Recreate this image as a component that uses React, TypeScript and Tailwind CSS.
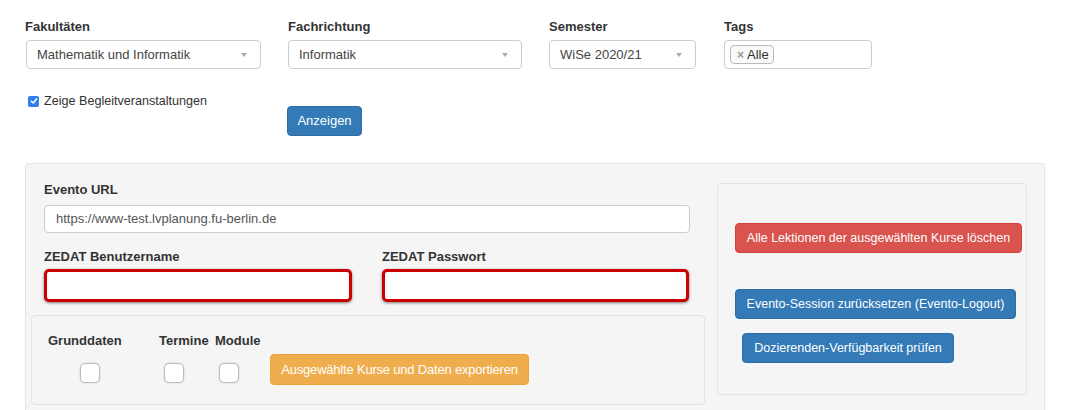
import React from 'react';

const Select = ({ value, width }: { value: string; width: string }) => (
  <div className={`${width} h-[29px] bg-white border border-[#ccc] rounded-[4px] flex items-center justify-between pl-[10px] pr-[13px] text-[#444]`}>
    <span>{value}</span>
    <span className="w-0 h-0 border-t-[4px] border-t-[#aaa] border-x-[3px] border-x-transparent" />
  </div>
);

const BigCheckbox = ({ className }: { className: string }) => (
  <div className={`w-[20px] h-[20px] bg-white border border-[#bdbdbd] rounded-[5px] shadow-[0_0_2px_rgba(0,0,0,0.2)] ${className}`} />
);

const App = () => {
  return (
    <div className="w-[1065px] h-[410px] overflow-hidden bg-white font-['Liberation_Sans',Arial,sans-serif] text-[13px] text-[#333]">
      <div className="pl-[25px] pt-[19px]">
        {/* Filter row */}
        <div className="flex">
          <div className="w-[235px] mr-[28px]">
            <label className="block font-bold leading-[16px] mb-[5px]">Fakultäten</label>
            <Select value="Mathematik und Informatik" width="w-[235px] ml-[1px]" />
          </div>
          <div className="w-[234px] mr-[27px]">
            <label className="block font-bold leading-[16px] mb-[5px]">Fachrichtung</label>
            <Select value="Informatik" width="w-[234px]" />
          </div>
          <div className="w-[147px] mr-[28px]">
            <label className="block font-bold leading-[16px] mb-[5px]">Semester</label>
            <Select value="WiSe 2020/21" width="w-[147px]" />
          </div>
          <div className="w-[148px]">
            <label className="block font-bold leading-[16px] mb-[5px]">Tags</label>
            <div className="w-[148px] h-[29px] bg-white border border-[#ccc] rounded-[4px] flex items-center pl-[5px]">
              <span className="h-[19px] flex items-center gap-[3px] pl-[6px] pr-[4px] border border-[#bbb] rounded-[4px] bg-[#fafafa] text-[#333]">
                <span className="text-[#999] font-bold text-[12px]">×</span>
                <span>Alle</span>
              </span>
            </div>
          </div>
        </div>

        {/* Options row */}
        <div className="flex items-start mt-[24px]">
          <div className="w-[262px] flex items-center h-[16px] pl-[3px] text-[12.6px]">
            <span className="w-[11px] h-[11px] rounded-[2px] bg-[#2f80ed] flex items-center justify-center mr-[5px]">
              <svg width="8" height="8" viewBox="0 0 8 8" fill="none">
                <path d="M1.3 4.2 L3.2 6 L6.7 1.8" stroke="white" strokeWidth="1.5" strokeLinecap="round" strokeLinejoin="round" />
              </svg>
            </span>
            <span className="text-[#333]">Zeige Begleitveranstaltungen</span>
          </div>
          <button className="mt-[13px] w-[75px] h-[30px] bg-[#337ab7] border border-[#2e6da4] rounded-[4px] text-white">
            Anzeigen
          </button>
        </div>

        {/* Export panel */}
        <div className="mt-[27px] w-[1020px] h-[270px] bg-[#f5f5f5] border border-[#e3e3e3] rounded-[4px] flex items-start pl-[5px]">
          <div className="w-[674px]">
            <div className="pt-[18px] pl-[13px] pr-[15px]">
              <label className="block font-bold leading-[16px] mb-[7px]">Evento URL</label>
              <div className="h-[28px] bg-white border border-[#ccc] rounded-[4px] flex items-center pl-[11px] text-[#555]">
                https://www-test.lvplanung.fu-berlin.de
              </div>
              <div className="flex gap-[30px] mt-[16px]">
                <div className="w-[308px]">
                  <label className="block font-bold leading-[16px] mb-[4px]">ZEDAT Benutzername</label>
                  <div className="h-[33px] bg-white border-[3px] border-[#cc0000] rounded-[5px] shadow-[0_1px_3px_rgba(0,0,0,0.5)]" />
                </div>
                <div className="w-[307px]">
                  <label className="block font-bold leading-[16px] mb-[4px]">ZEDAT Passwort</label>
                  <div className="h-[33px] bg-white border-[3px] border-[#cc0000] rounded-[5px] shadow-[0_1px_3px_rgba(0,0,0,0.5)]" />
                </div>
              </div>
            </div>
            <div className="mt-[13px] h-[90px] bg-[#f5f5f5] border border-[#e3e3e3] rounded-[4px] flex items-start pl-[16px] pt-[17px]">
              <div className="w-[111px]">
                <div className="font-bold leading-[16px]">Grunddaten</div>
                <BigCheckbox className="mt-[14px] ml-[32px]" />
              </div>
              <div className="w-[56px]">
                <div className="font-bold leading-[16px]">Termine</div>
                <BigCheckbox className="mt-[14px] ml-[5px]" />
              </div>
              <div className="w-[55px]">
                <div className="font-bold leading-[16px]">Module</div>
                <BigCheckbox className="mt-[14px] ml-[4px]" />
              </div>
              <button className="mt-[21px] w-[259px] h-[31px] bg-[#f0ad4e] border border-[#eea236] rounded-[4px] text-white tracking-[-0.2px]">
                Ausgewählte Kurse und Daten exportieren
              </button>
            </div>
          </div>

          <div className="mt-[19px] ml-[12px] w-[310px] h-[212px] bg-[#f5f5f5] border border-[#e3e3e3] rounded-[4px] pl-[17px] pt-[39px] text-[12.5px]">
            <button className="w-[287px] h-[30px] bg-[#d9534f] border border-[#d43f3a] rounded-[4px] text-white">
              Alle Lektionen der ausgewählten Kurse löschen
            </button>
            <button className="block mt-[36px] w-[281px] h-[30px] bg-[#337ab7] border border-[#2e6da4] rounded-[4px] text-white">
              Evento-Session zurücksetzen (Evento-Logout)
            </button>
            <button className="block mt-[14px] ml-[7px] w-[212px] h-[30px] bg-[#337ab7] border border-[#2e6da4] rounded-[4px] text-white">
              Dozierenden-Verfügbarkeit prüfen
            </button>
          </div>
        </div>
      </div>
    </div>
  );
};

export default App;
